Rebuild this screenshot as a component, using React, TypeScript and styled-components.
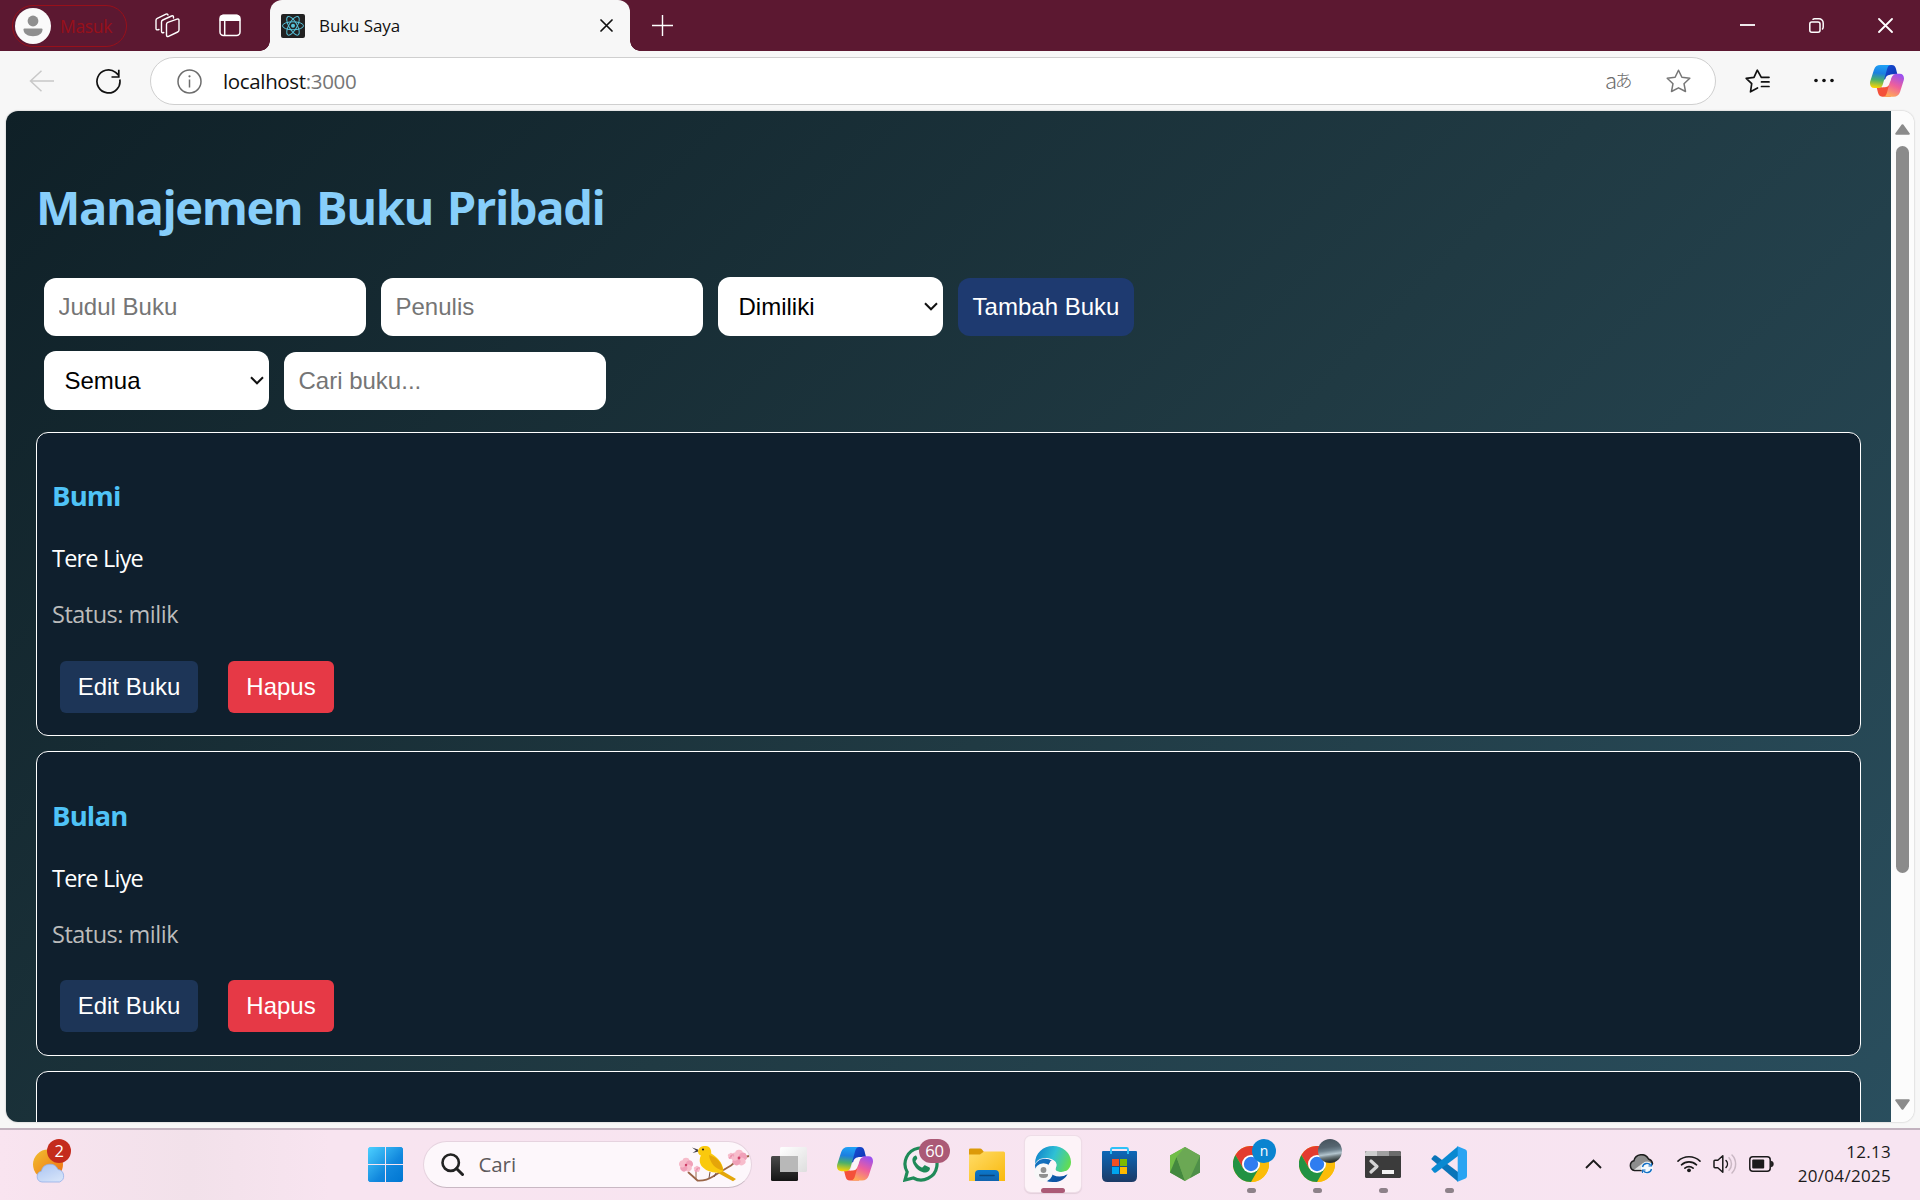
import React from 'react';
import styled, { createGlobalStyle } from 'styled-components';

const UI = `'Open Sans', 'Noto Sans', sans-serif`;
const ARIAL = `'Liberation Sans', Arial, sans-serif`;

const GlobalStyle = createGlobalStyle`
  * { box-sizing: border-box; }
  body { margin: 0; overflow: hidden; font-family: ${UI}; }
  svg { display: block; flex: none; }
`;

const Screen = styled.div`
  width: 1920px;
  height: 1200px;
  display: flex;
  flex-direction: column;
  background: #f7f7f7;
  overflow: hidden;
`;

/* ---------- browser chrome ---------- */

const TitleBar = styled.header`
  height: 51px;
  display: flex;
  align-items: center;
  background: #5c1831;
  color: #fff;
`;

const Profile = styled.div`
  width: 115px;
  height: 42px;
  margin-left: 12px;
  padding-left: 2px;
  border: 1.5px solid #98101a;
  border-radius: 21px;
  display: flex;
  align-items: center;
  gap: 9px;
  color: #98101a;
  font-size: 17.5px;
  letter-spacing: -0.35px;
`;

const TitleTools = styled.div`
  display: flex;
  align-items: center;
  gap: 39px;
  margin-left: 28px;
  width: 115px;
`;

const Tab = styled.div`
  position: relative;
  width: 360px;
  height: 51px;
  padding: 0 17px 0 11px;
  display: flex;
  align-items: center;
  background: #f7f7f7;
  border-radius: 12px 12px 0 0;
  color: #111;
  &::before,
  &::after {
    content: '';
    position: absolute;
    bottom: 0;
    width: 10px;
    height: 10px;
  }
  &::before {
    left: -10px;
    background: radial-gradient(circle at 0 0, transparent 9.5px, #f7f7f7 10px);
  }
  &::after {
    right: -10px;
    background: radial-gradient(circle at 100% 0, transparent 9.5px, #f7f7f7 10px);
  }
`;

const TabTitle = styled.span`
  flex: 1;
  margin-left: 14px;
  font-size: 17px;
  letter-spacing: -0.1px;
`;

const NewTab = styled.div`
  margin-left: 22px;
  margin-top: -1px;
`;

const WindowButtons = styled.div`
  margin-left: auto;
  margin-right: 27px;
  display: flex;
  align-items: center;
  gap: 54px;
`;

const Toolbar = styled.div`
  height: 60px;
  padding: 0 16px 0 29px;
  display: flex;
  align-items: center;
`;

const NavButtons = styled.div`
  width: 121px;
  display: flex;
  align-items: center;
  gap: 41.5px;
`;

const AddressBar = styled.div`
  width: 1566px;
  height: 48px;
  padding: 0 24px 0 25.5px;
  display: flex;
  align-items: center;
  background: #fff;
  border: 1.5px solid #cfcfcf;
  border-radius: 24px;
`;

const Url = styled.span`
  flex: 1;
  margin-left: 21.5px;
  font-size: 20.5px;
  letter-spacing: -0.35px;
  color: #111;
  & > span { color: #767676; }
`;

const Translate = styled.span`
  width: 28px;
  margin-right: 33px;
  font-family: 'Noto Sans CJK JP', sans-serif;
  font-weight: 300;
  font-size: 22px;
  line-height: 24px;
  white-space: nowrap;
  color: #6c6c6c;
  display: flex;
  align-items: center;
  & > b { font-weight: inherit; margin-top: -5px; }
  & > small { font-size: 17.5px; margin: -2px 0 0 -2px; }
`;

const ToolbarActions = styled.div`
  flex: 1;
  margin-left: 29px;
  display: flex;
  align-items: center;
  justify-content: space-between;
`;

const MenuDots = styled.div`
  margin-left: 8px;
`;

const Viewport = styled.div`
  height: 1011px;
  margin: 0 6px 6px;
  display: flex;
  border-radius: 12px;
  overflow: hidden;
  box-shadow: 0 0 2px rgba(0, 0, 0, 0.28);
`;

/* ---------- book page ---------- */

const Page = styled.main`
  width: 1885px;
  padding: 64px 30px 0 30px;
  background: linear-gradient(135deg, #0f2027, #203a43, #2c5364) 0 0 / 1885px 1318px;
  overflow: hidden;
`;

const Heading = styled.h1`
  margin: 0 0 38px;
  font-size: 47px;
  line-height: 64px;
  font-weight: 700;
  letter-spacing: -1.4px;
  word-spacing: 3px;
  white-space: nowrap;
  color: #87cefa;
`;

const FormRow = styled.div`
  height: 59px;
  margin: 0 0 15px 8px;
  display: flex;
  align-items: flex-end;
  gap: 15px;
`;

const Field = styled.input`
  width: 322px;
  height: 58px;
  padding: 0 14.5px;
  border: none;
  border-radius: 12px;
  background: #fff;
  font: 24px ${ARIAL};
  &::placeholder { color: #757575; opacity: 1; }
`;

const Picker = styled.div`
  width: 225px;
  height: 59px;
  padding: 0 5px 0 20.5px;
  display: flex;
  align-items: center;
  justify-content: space-between;
  border-radius: 12px;
  background: #fff;
  color: #000;
  font: 24px ${ARIAL};
`;

const AddButton = styled.button`
  width: 176px;
  height: 58px;
  padding: 0;
  border: none;
  border-radius: 12px;
  background: #1e3a70;
  color: #fff;
  font: 24px ${ARIAL};
`;

const Books = styled.section`
  margin-top: 21.9px;
  display: flex;
  flex-direction: column;
  gap: 15px;
`;

const Card = styled.article`
  width: 1825px;
  height: 304.4px;
  flex: none;
  padding: 44.4px 15px 0;
  background: #0f1f2d;
  border: 1px solid #fff;
  border-radius: 12px;
`;

const BookTitle = styled.h3`
  margin: 0 0 27px;
  font-size: 27.5px;
  line-height: 38px;
  letter-spacing: -0.85px;
  color: #4fc3f7;
`;

const BookLine = styled.p<{ $color: string; $tracking: number }>`
  margin: 0 0 24px;
  font-size: 23.5px;
  line-height: 32px;
  color: ${(p) => p.$color};
  letter-spacing: ${(p) => p.$tracking}px;
`;

const CardActions = styled.div`
  display: flex;
  gap: 30px;
  margin: 30.6px 0 0 8px;
`;

const ActionButton = styled.button<{ $bg: string; $width: number }>`
  width: ${(p) => p.$width}px;
  height: 52px;
  padding: 0;
  border: none;
  border-radius: 6px;
  background: ${(p) => p.$bg};
  color: #fff;
  font: 24px ${ARIAL};
`;

const ScrollTrack = styled.div`
  width: 23px;
  padding: 13px 0 12px;
  display: flex;
  flex-direction: column;
  align-items: center;
  background: #fcfcfc;
`;

const ScrollThumb = styled.div`
  width: 13px;
  height: 727px;
  margin: 11px 0 auto;
  border-radius: 7px;
  background: #8b8b8b;
`;

/* ---------- taskbar ---------- */

const Taskbar = styled.footer`
  height: 72px;
  padding-bottom: 2px;
  display: flex;
  align-items: center;
  border-top: 2px solid #c2b2bf;
  background: linear-gradient(90deg, #f9e4f0 0, #f2e1ea 190px, #f8e4f0 330px, #f7e4f1 100%);
`;

const Weather = styled.div`
  position: relative;
  width: 319.5px;
  margin-left: 33px;
  padding-top: 3px;
`;

const Badge = styled.span<{ $left: number; $top: number; $width: number; $bg: string; $size?: number }>`
  position: absolute;
  left: ${(p) => p.$left}px;
  top: ${(p) => p.$top}px;
  width: ${(p) => p.$width}px;
  height: 24px;
  border-radius: 12px;
  background: ${(p) => p.$bg};
  color: #fff;
  font-size: ${(p) => p.$size ?? 16.5}px;
  line-height: 24px;
  text-align: center;
  letter-spacing: -0.3px;
`;

const Slot = styled.div<{ $width?: number }>`
  position: relative;
  width: ${(p) => p.$width ?? 66}px;
  height: 68px;
  display: flex;
  align-items: center;
  justify-content: center;
`;

const ActiveTile = styled.div`
  width: 56px;
  height: 56px;
  border-radius: 6px;
  background: #fdf3f8;
  box-shadow: 0 0 0 1px #eedde7, 0 1px 1px 1px #e3cfdb;
  display: flex;
  align-items: center;
  justify-content: center;
`;

const Indicator = styled.span<{ $active?: boolean }>`
  position: absolute;
  bottom: 5px;
  left: calc(50% - ${(p) => (p.$active ? 12 : 4.5)}px);
  width: ${(p) => (p.$active ? 24 : 9)}px;
  height: 5px;
  border-radius: 3px;
  background: ${(p) => (p.$active ? '#ab5a76' : '#8d8189')};
`;

const Search = styled.div`
  width: 329px;
  height: 47px;
  margin: 0 4px 0 4.5px;
  padding: 0 0 0 16.5px;
  display: flex;
  align-items: center;
  border-radius: 24px;
  border: 1.5px solid #e6d3df;
  border-bottom-color: #c9b8c3;
  background: #fdf7fb;
  color: #5d5a5c;
  font-size: 20.5px;
  letter-spacing: -0.1px;
`;

const SearchText = styled.span`
  flex: 1;
  margin: -1px 0 0 15px;
`;

const Tray = styled.div`
  margin-left: auto;
  margin-right: 29px;
  display: flex;
  align-items: center;
`;

const Clock = styled.div`
  width: 106px;
  text-align: right;
  font-size: 17px;
  line-height: 24px;
  letter-spacing: 0.3px;
  color: #1b1a1b;
  white-space: nowrap;
`;

/* ---------- icons ---------- */

const Avatar = () => (
  <svg width="36" height="36" viewBox="0 0 36 36">
    <circle cx="18" cy="18" r="18" fill="#fafafa" />
    <circle cx="18" cy="13" r="5.4" fill="#8f8f8f" />
    <path d="M9.500 20.500h17a1 1 0 0 1 1 1c0 4-4 6.700-9.500 6.700s-9.500-2.700-9.500-6.700a1 1 0 0 1 1-1z" fill="#8f8f8f" />
  </svg>
);

const Workspaces = () => (
  <svg width="25" height="25" viewBox="0 0 25 25" fill="none" stroke="#fff" strokeWidth="1.4" strokeLinejoin="round" strokeLinecap="round">
    <path d="M11.500 11.200q0-1.400 1.300-1.900l9.200-3.200q2-.6 2 1.400v9.600q0 1.400-1.300 1.900l-9.200 4.300q-2 .7-2-1.300z" />
    <path d="M8.800 19.500q-2.300.8-2.300-1.200V9q0-1.400 1.300-2l8.700-4q2-.7 2 1.200v.8" />
    <path d="M4 16.500q-3 1-3-1V7.300q0-1.400 1.300-2L11 1.200q1.700-.7 2 .8" />
  </svg>
);

const VerticalTabs = () => (
  <svg width="22" height="23" viewBox="0 0 22 23" fill="none" stroke="#fff" strokeWidth="1.5">
    <rect x="1" y="1.500" width="20" height="20" rx="3.500" />
    <path d="M1.500 2.500 4 1.200h14l2.500 1.500v3.500h-19z" fill="#fff" />
    <path d="M5.700 6v15" />
  </svg>
);

const ReactIcon = () => (
  <svg width="24" height="24" viewBox="0 0 24 24" fill="none" stroke="#58c4dc" strokeWidth="1">
    <rect width="24" height="24" rx="2" fill="#222" stroke="none" />
    <circle cx="12" cy="11.800" r="2" fill="#58c4dc" stroke="none" />
    <ellipse cx="12" cy="11.800" rx="10.500" ry="4" />
    <ellipse cx="12" cy="11.800" rx="10.500" ry="4" transform="rotate(60 12 11.800)" />
    <ellipse cx="12" cy="11.800" rx="10.500" ry="4" transform="rotate(120 12 11.800)" />
  </svg>
);

const Cross = ({ size, color, weight }: { size: number; color: string; weight: number }) => (
  <svg width={size} height={size} viewBox={`0 0 ${size} ${size}`} stroke={color} strokeWidth={weight} strokeLinecap="round">
    <path d={`M1 1 ${size - 1} ${size - 1}M${size - 1} 1 1 ${size - 1}`} />
  </svg>
);

const Plus = () => (
  <svg width="21" height="21" viewBox="0 0 21 21" stroke="#fff" strokeWidth="1.400">
    <path d="M10.500 0v21M0 10.500h21" />
  </svg>
);

const Restore = () => (
  <svg width="15" height="15" viewBox="0 0 15 15" fill="none" stroke="#fff" strokeWidth="1.500" strokeLinecap="round">
    <rect x=".8" y="4" width="10.200" height="10.200" rx="2" />
    <path d="M4 1.300q.6-.5 1.500-.5H10a4.200 4.200 0 0 1 4.200 4.200v4q0 1.200-.7 2" />
  </svg>
);

const Back = () => (
  <svg width="25" height="22" viewBox="0 0 25 22" fill="none" stroke="#c8c8c8" strokeWidth="1.500">
    <path d="M12.500 .8 1.500 11l11 10.200M1.500 11H25" />
  </svg>
);

const Reload = () => (
  <svg width="25" height="25" viewBox="0 0 25 25" fill="none" stroke="#111" strokeWidth="1.700">
    <path d="M23.800 10.500a11.500 11.500 0 1 1-4.200-7.100L22.500 6" />
    <path d="M22.800 .8v7.200h-7.300" />
  </svg>
);

const Info = () => (
  <svg width="25" height="25" viewBox="0 0 25 25" fill="none" stroke="#6d6d6d" strokeWidth="1.500">
    <circle cx="12.500" cy="12.500" r="11.500" />
    <path d="M12.500 10.500v8" />
    <circle cx="12.500" cy="7.300" r="1.100" fill="#6d6d6d" stroke="none" />
  </svg>
);

const Star = () => (
  <svg width="25" height="24" viewBox="0 0 25 24" fill="none" stroke="#767676" strokeWidth="1.500" strokeLinejoin="round">
    <path d="M12.500 1.200 15.900 8.300 23.800 9.300 18 14.700 19.500 22.500 12.500 18.800 5.500 22.500 7 14.700 1.200 9.300 9.100 8.300z" />
  </svg>
);

const Favorites = () => (
  <svg width="25" height="24" viewBox="0 0 25 24" fill="none" stroke="#111" strokeWidth="1.700" strokeLinejoin="round" strokeLinecap="round">
    <path d="M16.300 8.300 12.300 1.200 9 8.300 1.200 9.300 6.700 14.700 5.500 22.800 12.500 19M16.300 8.300H24M16.500 12.900H24M16.500 17.500H24" />
  </svg>
);

const Dots = () => (
  <svg width="20" height="5" viewBox="0 0 20 5" fill="#111">
    <circle cx="2" cy="2.500" r="1.800" />
    <circle cx="10" cy="2.500" r="1.800" />
    <circle cx="18" cy="2.500" r="1.800" />
  </svg>
);

const Copilot = ({ id, size }: { id: string; size: number }) => (
  <svg width={size} height={(size * 34) / 36} viewBox="0 0 36 34">
    <defs>
      <linearGradient id={`${id}l`} x1=".4" y1="0" x2=".3" y2="1">
        <stop offset="0" stopColor="#1fa0f5" />
        <stop offset=".35" stopColor="#1c7fe0" />
        <stop offset=".65" stopColor="#4cb06a" />
        <stop offset="1" stopColor="#ffd500" />
      </linearGradient>
      <linearGradient id={`${id}r`} x1=".7" y1="0" x2=".3" y2="1">
        <stop offset="0" stopColor="#9a50f0" />
        <stop offset=".5" stopColor="#ee5f9c" />
        <stop offset="1" stopColor="#ffab55" />
      </linearGradient>
      <linearGradient id={`${id}t`} x1="0" y1="0" x2="1" y2="1">
        <stop offset="0" stopColor="#1b52d8" />
        <stop offset="1" stopColor="#0a2fae" />
      </linearGradient>
    </defs>
    <path d="M14 0h9c2.800 0 3.800 1.500 4.500 4l1.500 6h-5c-3.500 0-4.500 1.500-5.500 4.500L13 16z" fill={`url(#${id}t)`} />
    <path d="M22 33.500h-9c-2.800 0-3.800-1.500-4.500-4L7 23.500h5c3.500 0 4.500-1.500 5.500-4.500L23 17.500z" fill="#f4513a" />
    <path d="M11 0h11c-2.500.3-3.300 2-4 4.500L13.700 20c-.8 2.600-2 4.300-5 4.300H4.500C1 24.300-.6 21.500.2 17.500L4.200 5C5.500 1.500 7.500 0 11 0z" fill={`url(#${id}l)`} />
    <path d="M25 33.500H14c2.500-.3 3.300-2 4-4.500l4.300-15.500c.8-2.600 2-4.300 5-4.300h4.200c3.500 0 5.100 2.800 4.300 6.800L31.800 28.500c-1.300 3.500-3.300 5-6.800 5z" fill={`url(#${id}r)`} />
    <path d="M24 10h2.500c-2.500.6-3.400 2-4.200 4.500L20.500 20c-.9 2.500-2.500 3.500-5 3.500h-2.800c1-.7 1.500-1.800 2-3.500l1.900-6.500C17.500 11 20 10 24 10z" fill="#faf3f8" />
  </svg>
);

const SelectArrow = () => (
  <svg width="14" height="9" viewBox="0 0 14 9" fill="none" stroke="#111" strokeWidth="2">
    <path d="M1 1.200 7 7.300 13 1.200" />
  </svg>
);

const ScrollArrow = ({ flip }: { flip?: boolean }) => (
  <svg width="15" height="11" viewBox="0 0 15 11" fill="#8b8b8b" stroke="#8b8b8b" strokeWidth="2" strokeLinejoin="round">
    <path d={flip ? 'M1.200 1.200h12.600L7.500 9.800z' : 'M7.500 1.200 13.800 9.800H1.200z'} />
  </svg>
);

const SunCloud = () => (
  <svg width="33" height="34" viewBox="0 0 33 34">
    <defs>
      <linearGradient id="sun" x1="0" y1="0" x2="1" y2="1">
        <stop offset="0" stopColor="#f0c030" />
        <stop offset="1" stopColor="#f06a10" />
      </linearGradient>
      <linearGradient id="cloud" x1="0" y1="0" x2=".6" y2="1">
        <stop offset="0" stopColor="#a9c3f2" />
        <stop offset="1" stopColor="#d3e2f9" />
      </linearGradient>
    </defs>
    <circle cx="15" cy="15.500" r="15" fill="url(#sun)" />
    <path d="M9 33a5.500 5.500 0 0 1-.7-10.800A8.800 8.800 0 0 1 25 20.500a6.500 6.500 0 0 1 1.500 12.500z" fill="url(#cloud)" stroke="#93afe8" strokeWidth=".8" />
  </svg>
);

const WindowsLogo = () => (
  <svg width="35" height="35" viewBox="0 0 35 35">
    <defs>
      <linearGradient id="win" x1="0" y1="0" x2="1" y2="1">
        <stop offset="0" stopColor="#4cd0ff" />
        <stop offset=".6" stopColor="#1187dd" />
        <stop offset="1" stopColor="#0076d2" />
      </linearGradient>
    </defs>
    <path d="M1.500 0H17v17H0V1.500zM18 0h15.500L35 1.500V17H18zM0 18h17v17H1.500L0 33.500zM18 18h17v15.500L33.500 35H18z" fill="url(#win)" />
  </svg>
);

const Magnifier = () => (
  <svg width="23" height="23" viewBox="0 0 23 23" fill="none" stroke="#222" strokeWidth="2.600">
    <circle cx="9.700" cy="9.700" r="8.200" />
    <path d="m15.500 15.500 6 6" strokeWidth="3" strokeLinecap="round" />
  </svg>
);

const Blossom = ({ x, y, r }: { x: number; y: number; r: number }) => (
  <g transform={`translate(${x} ${y})`}>
    {[0, 72, 144, 216, 288].map((a) => (
      <ellipse key={a} cx="0" cy={-r * 0.54} rx={r * 0.5} ry={r * 0.48} fill={a % 144 ? '#f0a0b8' : '#f7bccb'} transform={`rotate(${a})`} />
    ))}
    <circle r={r * 0.18} fill="#cf4068" />
  </g>
);

const Bird = () => (
  <svg width="72" height="38" viewBox="0 0 72 38">
    <path d="M9 27 18.500 35.500Q27 36 34 31.500T52 20.500L61 13 70 11" fill="none" stroke="#9a6547" strokeWidth="1.800" />
    <path d="M17 35 17 25" stroke="#9a6547" strokeWidth="1" />
    <path d="M13 2.500 19 4.500 19.500 6.500 13.500 8 17 5.500z" fill="#46424a" />
    <path d="M40 24 57 34 54 36.300 39 28z" fill="#e3a60a" />
    <path d="M19 6c1-4.500 5-5.300 8-5 4 .5 5.600 3.800 5.200 7.500C37 11.500 44 17 44.500 26L41 27.500Q30 28.500 24 22.500C19.500 18.500 20.500 13 22 10.500 20 10 19 8.500 19 6z" fill="#fac90d" />
    <path d="M30 10C38 12 43 18 44 25.500 36 24 31 18 30 10z" fill="#e5a509" />
    <circle cx="24" cy="4.500" r="1.100" fill="#2b2322" />
    <path d="m31 27-1 6M37 28l-2 4" stroke="#745045" strokeWidth="1" />
    <Blossom x={7} y={20} r={7} />
    <Blossom x={18} y={24} r={3.2} />
    <Blossom x={60} y={13} r={8} />
    <Blossom x={52} y={11} r={3.2} />
  </svg>
);

const TaskView = () => (
  <svg width="36" height="34" viewBox="0 0 36 34">
    <defs>
      <linearGradient id="tvd" x1="0" y1="0" x2="0" y2="1">
        <stop offset="0" stopColor="#4a4a4a" />
        <stop offset="1" stopColor="#141414" />
      </linearGradient>
      <linearGradient id="tvl" x1="0" y1="0" x2="1" y2="1">
        <stop offset="0" stopColor="#fff" />
        <stop offset="1" stopColor="#dedede" />
      </linearGradient>
    </defs>
    <rect y="9" width="27" height="25" rx="1.500" fill="url(#tvd)" />
    <rect x="9" width="27" height="25" rx="1.500" fill="url(#tvl)" />
    <rect x="9" y="9" width="18" height="16" fill="#b8b8b8" />
  </svg>
);

const WhatsApp = () => (
  <svg width="36" height="36" viewBox="0 0 36 36">
    <path d="M2 34 4.200 26A16 16 0 1 1 10.400 32z" fill="#f8eaf3" stroke="#1f8a58" strokeWidth="3.200" />
    <path d="M12.500 9.500c-2.800 1-3.700 3.400-2.800 6.400 1.700 5.200 5.600 9 11 10.500 2.800.7 5.600-.5 6.200-3.300.2-1-.1-1.500-.8-1.900l-3.600-1.700c-1-.4-1.500.1-2.500 1.500-.5.500-1 .5-1.700.2-2.300-1-4.400-3-5.500-5.200-.4-.8-.3-1.200.3-1.800 1.300-1.300 1.300-1.600 1-2.600l-.7-1.500c-.2-.6-.4-.7-.9-.6z" fill="#1f8a58" />
  </svg>
);

const Explorer = () => (
  <svg width="36" height="33" viewBox="0 0 36 33">
    <defs>
      <linearGradient id="fold" x1="0" y1="0" x2="1" y2="1">
        <stop offset="0" stopColor="#ffdc68" />
        <stop offset="1" stopColor="#f9b90d" />
      </linearGradient>
      <linearGradient id="fb" x1="0" y1="0" x2="0" y2="1">
        <stop offset="0" stopColor="#0a78cc" />
        <stop offset="1" stopColor="#1163ae" />
      </linearGradient>
    </defs>
    <path d="M0 1.500Q0 .5 1.500.5h9.500q1.300 0 2 1L15 4v5H0z" fill="#dc9a08" />
    <path d="M0 6.500h11L15 3.500h19.500Q36 3.500 36 5v28H0z" fill="url(#fold)" />
    <path d="M6 33v-7q0-4 4-4h16q4 0 4 4v7z" fill="url(#fb)" />
    <path d="M11 27.500h14" stroke="#0b477e" strokeWidth="1.600" strokeLinecap="round" />
  </svg>
);

const Edge = () => (
  <svg width="38" height="38" viewBox="0 0 38 38">
    <defs>
      <linearGradient id="eg" x1="0" y1=".3" x2="1" y2=".6">
        <stop offset="0" stopColor="#1185cb" />
        <stop offset=".5" stopColor="#2fc0d5" />
        <stop offset="1" stopColor="#63dd50" />
      </linearGradient>
      <linearGradient id="eb" x1="0" y1="0" x2="1" y2="1">
        <stop offset="0" stopColor="#1377c5" />
        <stop offset="1" stopColor="#0c4b9b" />
      </linearGradient>
    </defs>
    <path d="M1 20C4 13 13 12 18 16c-6 3-5 11 1 14 5 2.300 10 2 14.500-1-2 5-8 8.500-14.500 8C8 37 1 30 1 20z" fill="url(#eb)" />
    <path d="M1 19C1 8 9 1 19 1s18 7 18 16c0 6-4 10-9.500 10-4 0-7-1.500-6-3.500 3-5-1-10-8.500-10.500C8 12.500 3 14.500 1 19z" fill="url(#eg)" />
    <path d="M16 16.500c4.500-2.500 8 1.500 5.700 6.500-1.500 4 6 5 10.300 3l3 .5-1 2.300c-6 3.500-15 2-17.500-3.500z" fill="#fdf6fa" />
    <circle cx="9.500" cy="27.500" r="9.300" fill="#f7f7f8" />
    <circle cx="9.500" cy="25" r="2.900" fill="#909090" />
    <path d="M5 29h9q.5 4-4.500 4T5 29z" fill="#909090" />
  </svg>
);

const Store = () => (
  <svg width="35" height="35" viewBox="0 0 35 35">
    <defs>
      <linearGradient id="st" x1="0" y1="0" x2="0" y2="1">
        <stop offset="0" stopColor="#0d68b8" />
        <stop offset="1" stopColor="#1b3a66" />
      </linearGradient>
    </defs>
    <path d="M0 5q0-1 1-1h33q1 0 1 1v24.500q0 5.500-5.500 5.500h-24Q0 35 0 29.500z" fill="url(#st)" />
    <path d="M9 7V2.500Q9 1 10.500 1h14Q26 1 26 2.500V7" fill="none" stroke="#2ec1f7" strokeWidth="1.900" />
    <path d="M10 12h7v7h-7z" fill="#f25022" />
    <path d="M18 12h7v7h-7z" fill="#7fba00" />
    <path d="M10 20h7v7h-7z" fill="#00a4ef" />
    <path d="M18 20h7v7h-7z" fill="#ffb900" />
  </svg>
);

const NodeJs = () => (
  <svg width="30" height="34" viewBox="0 0 30 34">
    <path d="M15 0 30 8.500v17L15 34 0 25.500v-17z" fill="#69a951" />
    <path d="M15 0 0 8.500v17L6 20z" fill="#71be48" />
    <path d="M0 25.500 6.500 10 15 34z" fill="#44883f" />
    <path d="M30 9v16.500L20 31z" fill="#4f8f49" />
    <path d="M15 0 30 8.500 15 34 6.500 10z" fill="#6ba854" />
  </svg>
);

const Chrome = () => (
  <svg width="36" height="36" viewBox="0 0 36 36">
    <circle cx="18" cy="18" r="18" fill="#fbbc09" />
    <path d="M18 18H33.600L33.600 9A18 18 0 0 0 2.400 9l7.800 13.500z" fill="#e33b2e" />
    <path d="M18 9h15.600A18 18 0 0 1 18 36l7.800-13.500z" fill="#fbbc09" />
    <path d="M2.400 9A18 18 0 0 0 18 36l7.800-13.500H10.200z" fill="#219243" />
    <circle cx="18" cy="18" r="9" fill="#fff" />
    <circle cx="18" cy="18" r="7.200" fill="#2f7df0" />
  </svg>
);

const PhotoBadge = styled.span`
  position: absolute;
  left: 34px;
  top: 9px;
  width: 24px;
  height: 24px;
  border-radius: 50%;
  background: linear-gradient(172deg, #44515b 0, #566570 35%, #6f828e 48%, #b3c5ce 62%, #6f7c80 72%, #2c3534 88%);
`;

const Terminal = () => (
  <svg width="36" height="27" viewBox="0 0 36 27">
    <rect width="36" height="27" rx="1.500" fill="#3b3b3b" />
    <path d="M1.500 0H12v5H0V1.500z" fill="#cdcdcd" />
    <path d="M12 0h12v5H12z" fill="#a0a0a0" />
    <path d="M24 0h10.500L36 1.500V5H24z" fill="#6c6c6c" />
    <path d="m6 10 6 5.500L6 21" fill="none" stroke="#d4d4d4" strokeWidth="3.200" strokeLinecap="round" strokeLinejoin="round" />
    <path d="M17 19h12v4H17z" fill="#f2f2f2" />
  </svg>
);

const VsCode = () => (
  <svg width="36" height="36" viewBox="0 0 36 36">
    <path d="M.5 12.500 3 9.500q1-.7 2 0L27 26v9.700L1 13.800q-.7-.6-.5-1.300z" fill="#0a74b8" />
    <path d="M.5 23.500 3 26.500q1 .7 2 0L27 10V.3L1 22.200q-.7.600-.5 1.300z" fill="#0989d1" />
    <path d="M26 0 34.500 3.500Q36 4.200 36 6v24q0 1.800-1.500 2.500L26 36q.7-.6.7-2V2q0-1.400-.7-2z" fill="#2aa4f2" />
  </svg>
);

const ChevronUp = () => (
  <svg width="17" height="10" viewBox="0 0 17 10" fill="none" stroke="#1b1a1b" strokeWidth="1.900">
    <path d="M1 9 8.500 1.500 16 9" />
  </svg>
);

const CloudSync = () => (
  <svg width="25" height="20" viewBox="0 0 25 20">
    <path d="M5.500 16.500a5 5 0 0 1-.6-9.700A7.800 7.800 0 0 1 19.500 5a5.800 5.800 0 0 1 4 4.500L20 16.500z" fill="#8d8d8d" stroke="#1d1d1d" strokeWidth="1.500" />
    <path d="M5 15.700 14 9q5-3 8.500.5l-4 6.200z" fill="#dedede" />
    <circle cx="18" cy="14" r="6" fill="#f5f9fd" />
    <path d="M13.500 13a4.600 4.600 0 0 1 8.200-1.700M22.500 15a4.600 4.600 0 0 1-8.200 1.700" fill="none" stroke="#1671c6" strokeWidth="1.400" />
    <path d="M22.500 9v3h-3M13.500 19v-3h3" fill="none" stroke="#1671c6" strokeWidth="1.100" />
  </svg>
);

const Wifi = () => (
  <svg width="24" height="18" viewBox="0 0 24 18" fill="none" stroke="#1b1a1b" strokeWidth="1.600" strokeLinecap="round">
    <path d="M1 6.200a16 16 0 0 1 22 0M4.500 9.800a11 11 0 0 1 15 0M7.900 13.200a6 6 0 0 1 8.200 0" />
    <circle cx="12" cy="15.300" r="1.900" fill="#1b1a1b" stroke="none" />
  </svg>
);

const Speaker = () => (
  <svg width="25" height="20" viewBox="0 0 25 20" fill="none" stroke="#1b1a1b" strokeWidth="1.500" strokeLinecap="round" strokeLinejoin="round">
    <path d="M1 7.200q0-.9.900-.9h2.900l5-4.500v16.400l-5-4.500H1.900q-.9 0-.9-.9z" />
    <path d="M13 6.500a5 5 0 0 1 0 7" />
    <path d="M16 3.800a9 9 0 0 1 0 12.400M19 1a13 13 0 0 1 0 18" stroke="#c9b7c3" />
  </svg>
);

const Battery = () => (
  <svg width="25" height="16" viewBox="0 0 25 16">
    <rect x=".8" y=".8" width="20.400" height="14.400" rx="3" fill="none" stroke="#1b1a1b" strokeWidth="1.500" />
    <rect x="3.200" y="3.500" width="12" height="9" rx="1" fill="#1b1a1b" />
    <path d="M22.300 5.300q1.900 0 1.900 2.700t-1.900 2.700z" fill="#1b1a1b" stroke="#1b1a1b" />
  </svg>
);

/* ---------- composition ---------- */

const books = [
  { title: 'Bumi', author: 'Tere Liye', status: 'milik' },
  { title: 'Bulan', author: 'Tere Liye', status: 'milik' },
];

const BookCard = ({ title, author, status }: { title: string; author: string; status: string }) => (
  <Card>
    <BookTitle>{title}</BookTitle>
    <BookLine $color="#fff" $tracking={-0.8}>{author}</BookLine>
    <BookLine $color="#bbb" $tracking={-0.5}>Status: {status}</BookLine>
    <CardActions>
      <ActionButton $bg="#1d3557" $width={138}>Edit Buku</ActionButton>
      <ActionButton $bg="#e63946" $width={106}>Hapus</ActionButton>
    </CardActions>
  </Card>
);

export default function App() {
  return (
    <Screen>
      <GlobalStyle />
      <TitleBar>
        <Profile><Avatar />Masuk</Profile>
        <TitleTools><Workspaces /><VerticalTabs /></TitleTools>
        <Tab>
          <ReactIcon />
          <TabTitle>Buku Saya</TabTitle>
          <Cross size={13} color="#111" weight={1.7} />
        </Tab>
        <NewTab><Plus /></NewTab>
        <WindowButtons>
          <svg width="15" height="15" viewBox="0 0 15 15"><path d="M0 7h15" stroke="#fff" strokeWidth="1.800" /></svg>
          <Restore />
          <Cross size={15} color="#fff" weight={1.8} />
        </WindowButtons>
      </TitleBar>
      <Toolbar>
        <NavButtons><Back /><Reload /></NavButtons>
        <AddressBar>
          <Info />
          <Url>localhost<span>:3000</span></Url>
          <Translate><b>a</b><small>あ</small></Translate>
          <Star />
        </AddressBar>
        <ToolbarActions>
          <Favorites />
          <MenuDots><Dots /></MenuDots>
          <Copilot id="tb" size={34} />
        </ToolbarActions>
      </Toolbar>
      <Viewport>
        <Page>
          <Heading>Manajemen Buku Pribadi</Heading>
          <FormRow>
            <Field placeholder="Judul Buku" />
            <Field placeholder="Penulis" />
            <Picker>Dimiliki<SelectArrow /></Picker>
            <AddButton>Tambah Buku</AddButton>
          </FormRow>
          <FormRow>
            <Picker>Semua<SelectArrow /></Picker>
            <Field placeholder="Cari buku..." />
          </FormRow>
          <Books>
            {books.map((b) => <BookCard key={b.title} {...b} />)}
            <Card />
          </Books>
        </Page>
        <ScrollTrack>
          <ScrollArrow />
          <ScrollThumb />
          <ScrollArrow flip />
        </ScrollTrack>
      </Viewport>
      <Taskbar>
        <Weather>
          <SunCloud />
          <Badge $left={14} $top={-7} $width={24} $bg="#c42b1c">2</Badge>
        </Weather>
        <Slot><WindowsLogo /></Slot>
        <Search>
          <Magnifier />
          <SearchText>Cari</SearchText>
          <Bird />
        </Search>
        <Slot><TaskView /></Slot>
        <Slot><Copilot id="tk" size={36} /></Slot>
        <Slot>
          <WhatsApp />
          <Badge $left={31} $top={9} $width={31} $bg="#ab5a76">60</Badge>
        </Slot>
        <Slot><Explorer /></Slot>
        <Slot><ActiveTile><Edge /></ActiveTile><Indicator $active /></Slot>
        <Slot><Store /></Slot>
        <Slot><NodeJs /></Slot>
        <Slot>
          <Chrome />
          <Badge $left={34} $top={9} $width={24} $bg="#0a84d0" $size={14}>n</Badge>
          <Indicator />
        </Slot>
        <Slot><Chrome /><PhotoBadge /><Indicator /></Slot>
        <Slot><Terminal /><Indicator /></Slot>
        <Slot><VsCode /><Indicator /></Slot>
        <Tray>
          <Slot $width={48}><ChevronUp /></Slot>
          <Slot $width={48}><CloudSync /></Slot>
          <Slot $width={48}><Wifi /></Slot>
          <Slot $width={24}><Speaker /></Slot>
          <Slot $width={48}><Battery /></Slot>
          <Clock>12.13<br />20/04/2025</Clock>
        </Tray>
      </Taskbar>
    </Screen>
  );
}
